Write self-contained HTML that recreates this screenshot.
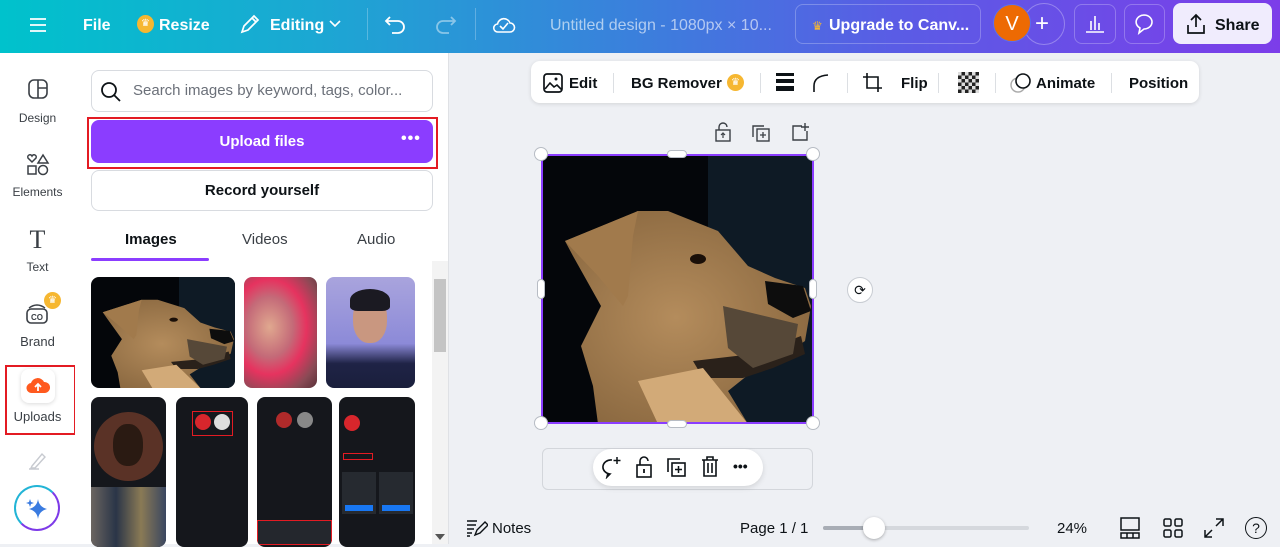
<!DOCTYPE html>
<html><head><meta charset="utf-8"><style>
*{box-sizing:border-box;margin:0;padding:0}
body{width:1280px;height:544px;overflow:hidden;font-family:"Liberation Sans",sans-serif;background:#eef0f4;position:relative;color:#0d1216}
.abs{position:absolute}
#hdr{left:0;top:0;width:1280px;height:53px;background:linear-gradient(90deg,#00c2cc 0%,#1ca7d3 25%,#3b7fdc 50%,#5a5ce5 70%,#7c3de9 100%);color:#fff}
#hdr .t{position:absolute;top:17px;font-size:16px;font-weight:bold}
.hbtn{position:absolute;top:4px;height:40px;border:1px solid rgba(255,255,255,.25);border-radius:8px}
#rail{left:0;top:53px;width:75px;height:491px;background:#fff}
.ri{position:absolute;left:0;width:75px;text-align:center;font-size:12px;color:#3a3f45}
#panel{left:75px;top:53px;width:374px;height:491px;background:#fff;border-right:1px solid #dfe1e5}
.box{position:absolute;border:1px solid #d8dbe0;border-radius:8px;background:#fff}
#canvas{left:450px;top:53px;width:830px;height:491px;background:#eef0f4}
.ph{position:absolute;border-radius:8px;overflow:hidden}
.handle{position:absolute;width:14px;height:14px;border-radius:50%;background:#fff;border:1px solid #b7bcc4}
.tb{position:absolute;top:22px;font-size:15px;font-weight:bold}
</style></head><body>
<svg width="0" height="0" style="position:absolute"><defs>
<radialGradient id="fur" cx="0.45" cy="0.5" r="0.6"><stop offset="0" stop-color="#b48c5c"/><stop offset="1" stop-color="#8a6840"/></radialGradient>
<symbol id="dog" viewBox="0 0 270 268" preserveAspectRatio="none">
<rect width="270" height="268" fill="#04060a"/>
<rect x="165" y="0" width="105" height="268" fill="#0e1a25"/>
<path d="M22 85 L95 55 L125 55 L175 75 L205 110 L232 122 L262 132 L268 150 L262 185 L240 200 L210 215 L185 235 L205 268 L55 268 L50 230 L38 190 L58 150 L30 100Z" fill="url(#fur)"/>
<path d="M22 85 L95 55 L90 80 L85 140 L80 150 L55 120Z" fill="#a17a4c"/>
<path d="M150 205 L210 198 L258 180 L262 198 L230 212 L200 222 L160 222Z" fill="#2a211a"/>
<path d="M222 125 L260 130 L268 155 L250 162 L225 148Z" fill="#0d0d0d"/>
<path d="M180 150 L255 168 L250 198 L210 212 L185 192Z" fill="#564838"/>
<ellipse cx="155" cy="103" rx="8" ry="5" fill="#1a0f08"/>
<path d="M95 225 L160 212 L205 268 L115 268Z" fill="#d2aa78"/>
</symbol>
</defs></svg>

<div id="hdr" class="abs">
 <svg class="abs" style="left:28px;top:16px" width="20" height="18"><path d="M2 3h16M2 9h16M2 15h16" stroke="#fff" stroke-width="1.8"/></svg>
 <div class="t" style="left:83px">File</div>
 <div class="abs" style="left:137px;top:15px;width:17px;height:18px;border-radius:50%;background:#f6b731;color:#fff;font-size:10px;text-align:center;line-height:18px">♛</div>
 <div class="t" style="left:159px">Resize</div>
 <svg class="abs" style="left:239px;top:13px" width="22" height="22"><path d="M3 19l2-6L15 3l4 4L9 17z M13 5l4 4" fill="none" stroke="#fff" stroke-width="1.7"/></svg>
 <div class="t" style="left:270px">Editing</div>
 <svg class="abs" style="left:328px;top:19px" width="14" height="10"><path d="M2 2l5 5 5-5" fill="none" stroke="#fff" stroke-width="1.6"/></svg>
 <div class="abs" style="left:367px;top:8px;width:1px;height:32px;background:rgba(255,255,255,.25)"></div>
 <svg class="abs" style="left:384px;top:13px" width="24" height="22"><path d="M6 4L2 8l4 4M2 8h12a6 6 0 010 12H8" fill="none" stroke="#fff" stroke-width="1.8"/></svg>
 <svg class="abs" style="left:433px;top:13px" width="24" height="22"><path d="M18 4l4 4-4 4M22 8H10a6 6 0 000 12h6" fill="none" stroke="rgba(255,255,255,.45)" stroke-width="1.8"/></svg>
 <div class="abs" style="left:475px;top:8px;width:1px;height:32px;background:rgba(255,255,255,.25)"></div>
 <svg class="abs" style="left:491px;top:12px" width="26" height="26"><path d="M7 20h12a4.5 4.5 0 000-9 6.5 6.5 0 00-12.5 1A4 4 0 007 20z M9 14l3 3 5-6" fill="none" stroke="#fff" stroke-width="1.6"/></svg>
 <div class="t" style="left:550px;font-weight:normal;color:rgba(255,255,255,.6)">Untitled design - 1080px × 10...</div>
 <div class="hbtn" style="left:795px;width:186px"></div>
 <div class="abs" style="left:812px;top:19px;font-size:12px;color:#f6b731">♛</div>
 <div class="t" style="left:829px">Upgrade to Canv...</div>
 <div class="abs" style="left:1023px;top:3px;width:42px;height:42px;border-radius:50%;border:1px solid rgba(255,255,255,.3)"></div>
 <div class="abs" style="left:1035px;top:10px;font-size:24px;font-weight:300">+</div>
 <div class="abs" style="left:993px;top:4px;width:38px;height:38px;border-radius:50%;background:#ed6a03;border:1px solid #5a6df0;text-align:center;line-height:38px;font-size:20px">V</div>
 <div class="hbtn" style="left:1074px;width:42px"></div>
 <svg class="abs" style="left:1084px;top:13px" width="22" height="22"><path d="M2 19h18M7 17V8M11 17V3M15 17V10" stroke="#fff" stroke-width="1.6"/></svg>
 <div class="hbtn" style="left:1124px;width:41px"></div>
 <svg class="abs" style="left:1133px;top:13px" width="22" height="22"><path d="M11 2a8 7 0 110 14l-5 4 1-5a8 7 0 014-13z" fill="none" stroke="#fff" stroke-width="1.6"/></svg>
 <div class="abs" style="left:1173px;top:3px;width:99px;height:41px;border-radius:8px;background:#f0ecfd"></div>
 <svg class="abs" style="left:1185px;top:13px" width="22" height="22"><path d="M11 14V2M6 7l5-5 5 5M3 12v8h16v-8" fill="none" stroke="#0d1216" stroke-width="1.7"/></svg>
 <div class="t" style="left:1215px;color:#0d1216">Share</div>
</div>

<div id="rail" class="abs">
 <svg class="abs" style="left:27px;top:25px" width="22" height="22"><rect x="2" y="2" width="18" height="18" rx="5" fill="none" stroke="#3a3f45" stroke-width="1.6"/><path d="M11 2v18M11 10h9" stroke="#3a3f45" stroke-width="1.6"/></svg>
 <div class="ri" style="top:58px">Design</div>
 <svg class="abs" style="left:26px;top:100px" width="24" height="24"><path d="M6 9l-4-4a2 2 0 014-2 2 2 0 014 2z" fill="none" stroke="#3a3f45" stroke-width="1.5"/><path d="M17 2l5 8h-10z" fill="none" stroke="#3a3f45" stroke-width="1.5"/><rect x="2" y="13" width="8" height="8" fill="none" stroke="#3a3f45" stroke-width="1.5"/><circle cx="17" cy="17" r="4.5" fill="none" stroke="#3a3f45" stroke-width="1.5"/></svg>
 <div class="ri" style="top:132px">Elements</div>
 <div class="ri" style="top:172px;font-size:26px;font-family:'Liberation Serif',serif">T</div>
 <div class="ri" style="top:207px">Text</div>
 <svg class="abs" style="left:24px;top:248px" width="26" height="24"><rect x="3" y="8" width="20" height="14" rx="4" fill="none" stroke="#3a3f45" stroke-width="1.6"/><text x="7" y="19" font-size="8" font-weight="bold" fill="#3a3f45" font-family="Liberation Sans">CO</text><path d="M5 7q8-6 16 0" fill="none" stroke="#3a3f45" stroke-width="1.4"/></svg>
 <div class="abs" style="left:44px;top:239px;width:17px;height:17px;border-radius:50%;background:#f6b731;color:#fff;font-size:10px;text-align:center;line-height:17px">♛</div>
 <div class="ri" style="top:281px;font-size:13px">Brand</div>
 <div class="abs" style="left:5px;top:312px;width:71px;height:70px;border:2px solid #e31b23"></div>
 <div class="abs" style="left:21px;top:316px;width:34px;height:34px;border-radius:8px;background:#fff;box-shadow:0 1px 4px rgba(0,0,0,.15)"></div>
 <svg class="abs" style="left:26px;top:322px" width="24" height="20"><path d="M6 18a5 5 0 01-1-10 7 7 0 0113-1 5 5 0 011 11z" fill="#ff5a1f"/><path d="M12 16V9M9 12l3-3 3 3" fill="none" stroke="#fff" stroke-width="1.8"/></svg>
 <div class="ri" style="top:356px;font-size:13px">Uploads</div>
 <svg class="abs" style="left:27px;top:397px" width="22" height="20"><path d="M5 16L15 4l3 3L8 18H4z M2 19h10" fill="none" stroke="#c7cad0" stroke-width="1.4"/></svg>
 <div class="abs" style="left:14px;top:432px;width:46px;height:46px;border-radius:50%;border:2px solid #5a5ce5;border-color:#22b4d6 #7d3ae8 #7d3ae8 #22b4d6"></div>
 <svg class="abs" style="left:25px;top:443px" width="26" height="26"><path d="M13 3q1 8 9 10q-8 2-9 10q-1-8-9-10q8-2 9-10z" fill="#3a7be0"/><path d="M5 3l1 3 3 1-3 1-1 3-1-3-3-1 3-1z" fill="#3a7be0"/></svg>
</div>

<div id="panel" class="abs">
 <div class="box" style="left:16px;top:17px;width:342px;height:42px"></div>
 <svg class="abs" style="left:25px;top:28px" width="22" height="22"><circle cx="9" cy="9" r="7" fill="none" stroke="#0d1216" stroke-width="1.8"/><path d="M14 14l6 6" stroke="#0d1216" stroke-width="1.8"/></svg>
 <div class="abs" style="left:58px;top:29px;font-size:15px;color:#6b7079">Search images by keyword, tags, color...</div>
 <div class="abs" style="left:12px;top:64px;width:351px;height:52px;border:2px solid #e31b23"></div>
 <div class="abs" style="left:16px;top:67px;width:342px;height:43px;border-radius:8px;background:#8b3dff;color:#fff;font-weight:bold;font-size:15px;text-align:center;line-height:43px">Upload files</div>
 <div class="abs" style="left:326px;top:77px;color:#fff;font-size:16px;font-weight:bold;letter-spacing:1px">•••</div>
 <div class="box" style="left:16px;top:117px;width:342px;height:41px;text-align:center;line-height:39px;font-size:15px;font-weight:bold">Record yourself</div>
 <div class="abs" style="left:50px;top:178px;font-size:15px;font-weight:bold">Images</div>
 <div class="abs" style="left:16px;top:205px;width:118px;height:3px;background:#8b3dff;border-radius:2px"></div>
 <div class="abs" style="left:167px;top:178px;font-size:15px;color:#3a3f45">Videos</div>
 <div class="abs" style="left:282px;top:178px;font-size:15px;color:#3a3f45">Audio</div>
 <div class="abs" style="left:357px;top:208px;width:16px;height:283px;background:#f3f3f3"></div>
 <div class="abs" style="left:359px;top:226px;width:12px;height:73px;background:#c4c4c4"></div>
 <div class="ph" style="left:16px;top:224px;width:144px;height:111px"><svg width="144" height="111"><use href="#dog"/></svg></div>
 <div class="ph" style="left:169px;top:224px;width:73px;height:111px;background:radial-gradient(ellipse at 35% 45%,#e0a88f 0%,#c46a78 35%,#e6335f 55%,#8a4a55 80%,#5a3038 100%)"></div>
 <div class="ph" style="left:251px;top:224px;width:89px;height:111px;background:linear-gradient(180deg,#a9a4dd 0%,#8c8ad8 60%,#1f2346 78%,#1a1f3c 100%)"><div style="position:absolute;left:27px;top:18px;width:34px;height:48px;border-radius:45%;background:#c99780"></div><div style="position:absolute;left:24px;top:12px;width:40px;height:22px;border-radius:50% 50% 20% 20%;background:#1b1a22"></div></div>
 <div class="ph" style="left:16px;top:344px;width:75px;height:150px;background:#15171c"><div style="position:absolute;left:3px;top:15px;width:69px;height:69px;border-radius:50%;background:#5a3226"></div><div style="position:absolute;left:22px;top:27px;width:30px;height:42px;border-radius:45%;background:#2a1a12"></div><div style="position:absolute;left:0;top:90px;width:75px;height:60px;background:linear-gradient(90deg,#6b6560,#2a3548,#8a7a55,#3a4660)"></div></div>
 <div class="ph" style="left:101px;top:344px;width:72px;height:150px;background:#15171c"><div style="position:absolute;left:16px;top:14px;width:41px;height:25px;border:1px solid #e31b23"></div><div style="position:absolute;left:19px;top:17px;width:16px;height:16px;border-radius:50%;background:#d8262c"></div><div style="position:absolute;left:38px;top:17px;width:16px;height:16px;border-radius:50%;background:#ddd"></div></div>
 <div class="ph" style="left:182px;top:344px;width:75px;height:150px;background:#15171c"><div style="position:absolute;left:19px;top:15px;width:16px;height:16px;border-radius:50%;background:#b02a2a"></div><div style="position:absolute;left:40px;top:15px;width:16px;height:16px;border-radius:50%;background:#888"></div><div style="position:absolute;left:0;background:#24272d;border:1px solid #e31b23;top:123px;width:75px;height:25px"></div></div>
 <div class="ph" style="left:264px;top:344px;width:76px;height:150px;background:#15171c"><div style="position:absolute;left:5px;top:18px;width:16px;height:16px;border-radius:50%;background:#d8262c"></div><div style="position:absolute;left:4px;top:56px;width:30px;height:7px;border:1px solid #e31b23"></div><div style="position:absolute;left:3px;top:75px;width:34px;height:42px;background:#262a30"></div><div style="position:absolute;left:40px;top:75px;width:34px;height:42px;background:#262a30"></div><div style="position:absolute;left:6px;top:108px;width:28px;height:6px;background:#1877f2"></div><div style="position:absolute;left:43px;top:108px;width:28px;height:6px;background:#1877f2"></div></div>
 <svg class="abs" style="left:359px;top:480px" width="12" height="8"><path d="M1 1h10L6 7z" fill="#555"/></svg>
</div>

<div id="canvas" class="abs">
 <div class="abs" style="left:81px;top:8px;width:668px;height:42px;background:#fff;border-radius:9px;box-shadow:0 1px 4px rgba(0,0,0,.12)"></div>
 <svg class="abs" style="left:92px;top:19px" width="22" height="22"><rect x="2" y="2" width="18" height="18" rx="3" fill="none" stroke="#0d1216" stroke-width="1.7"/><path d="M3 17l5-6 4 4 3-2 5 5" fill="none" stroke="#0d1216" stroke-width="1.6"/><circle cx="14" cy="7" r="1.5" fill="#0d1216"/></svg>
 <div class="tb" style="left:119px">Edit</div>
 <div class="abs" style="left:163px;top:20px;width:1px;height:20px;background:#dcdfe3"></div>
 <div class="tb" style="left:181px">BG Remover</div>
 <div class="abs" style="left:277px;top:21px;width:17px;height:17px;border-radius:50%;background:#f6b731;color:#fff;font-size:10px;text-align:center;line-height:17px">♛</div>
 <div class="abs" style="left:310px;top:20px;width:1px;height:20px;background:#dcdfe3"></div>
 <div class="abs" style="left:326px;top:20px;width:18px;height:3px;background:#0d1216"></div>
 <div class="abs" style="left:326px;top:26px;width:18px;height:4px;background:#0d1216"></div>
 <div class="abs" style="left:326px;top:33px;width:18px;height:5px;background:#0d1216"></div>
 <svg class="abs" style="left:362px;top:19px" width="20" height="22"><path d="M2 20V14Q2 4 16 3" fill="none" stroke="#0d1216" stroke-width="1.6"/></svg>
 <div class="abs" style="left:397px;top:20px;width:1px;height:20px;background:#dcdfe3"></div>
 <svg class="abs" style="left:412px;top:19px" width="22" height="22"><path d="M5 1v15h15M1 5h15v15" fill="none" stroke="#0d1216" stroke-width="1.6"/></svg>
 <div class="tb" style="left:451px">Flip</div>
 <div class="abs" style="left:488px;top:20px;width:1px;height:20px;background:#dcdfe3"></div>
 <div class="abs" style="left:508px;top:19px;width:21px;height:21px;background:repeating-conic-gradient(#222 0 25%,#ddd 0 50%) 0 0/7px 7px"></div>
 <div class="abs" style="left:545px;top:20px;width:1px;height:20px;background:#dcdfe3"></div>
 <svg class="abs" style="left:559px;top:18px" width="24" height="24"><circle cx="9" cy="14" r="7" fill="none" stroke="#aaa" stroke-width="1.4"/><circle cx="14" cy="10" r="7" fill="#fff" stroke="#0d1216" stroke-width="1.6"/></svg>
 <div class="tb" style="left:586px">Animate</div>
 <div class="abs" style="left:661px;top:20px;width:1px;height:20px;background:#dcdfe3"></div>
 <div class="tb" style="left:679px">Position</div>

 <svg class="abs" style="left:264px;top:69px" width="18" height="20"><rect x="2" y="8" width="14" height="11" fill="none" stroke="#3a3f45" stroke-width="1.4"/><path d="M5 8V5a4 4 0 018 0" fill="none" stroke="#3a3f45" stroke-width="1.4"/><path d="M9 16v-4M7 13l2-2 2 2" stroke="#3a3f45" stroke-width="1.2" fill="none"/></svg>
 <svg class="abs" style="left:301px;top:70px" width="20" height="20"><path d="M2 14V3h11" fill="none" stroke="#3a3f45" stroke-width="1.4"/><rect x="6" y="6" width="12" height="12" fill="none" stroke="#3a3f45" stroke-width="1.4"/><path d="M12 9v6M9 12h6" stroke="#3a3f45" stroke-width="1.3"/></svg>
 <svg class="abs" style="left:340px;top:69px" width="20" height="20"><path d="M12 4H3v14h14v-9" fill="none" stroke="#3a3f45" stroke-width="1.4"/><path d="M15 1v8M11 5h8" stroke="#3a3f45" stroke-width="1.4"/></svg>

 <div class="abs" style="left:91px;top:101px;width:273px;height:270px;border:2px solid #8b3dff;overflow:hidden"><svg width="270" height="268"><use href="#dog"/></svg></div>
 <div class="handle" style="left:84px;top:94px"></div>
 <div class="handle" style="left:356px;top:94px"></div>
 <div class="handle" style="left:84px;top:363px"></div>
 <div class="handle" style="left:356px;top:363px"></div>
 <div class="abs" style="left:217px;top:97px;width:20px;height:8px;border-radius:4px;background:#fff;border:1px solid #b7bcc4"></div>
 <div class="abs" style="left:217px;top:367px;width:20px;height:8px;border-radius:4px;background:#fff;border:1px solid #b7bcc4"></div>
 <div class="abs" style="left:87px;top:226px;width:8px;height:20px;border-radius:4px;background:#fff;border:1px solid #b7bcc4"></div>
 <div class="abs" style="left:359px;top:226px;width:8px;height:20px;border-radius:4px;background:#fff;border:1px solid #b7bcc4"></div>
 <div class="abs" style="left:397px;top:224px;width:26px;height:26px;border-radius:50%;background:#fff;border:1px solid #c8ccd2;text-align:center;line-height:24px;font-size:14px">⟳</div>

 <div class="abs" style="left:92px;top:395px;width:271px;height:42px;border:1px solid #d3d6db;border-radius:6px"></div>
 <div class="abs" style="left:143px;top:396px;width:170px;height:37px;border-radius:19px;background:#fff;box-shadow:0 2px 6px rgba(0,0,0,.12)"></div>
 <svg class="abs" style="left:149px;top:402px" width="24" height="24"><path d="M13 5a8 7 0 10-2 14l-3 3 1-4" fill="none" stroke="#0d1216" stroke-width="1.6"/><path d="M18 2v7M14.5 5.5h7" stroke="#0d1216" stroke-width="1.5"/></svg>
 <svg class="abs" style="left:184px;top:402px" width="20" height="24"><rect x="3" y="10" width="14" height="12" fill="none" stroke="#0d1216" stroke-width="1.6"/><path d="M6 10V6a4 4 0 018 0" fill="none" stroke="#0d1216" stroke-width="1.6"/><path d="M10 14v4" stroke="#0d1216" stroke-width="1.8"/></svg>
 <svg class="abs" style="left:216px;top:403px" width="22" height="22"><path d="M2 16V3h12" fill="none" stroke="#0d1216" stroke-width="1.6"/><rect x="6" y="7" width="13" height="13" fill="none" stroke="#0d1216" stroke-width="1.6"/><path d="M12.5 10v7M9 13.5h7" stroke="#0d1216" stroke-width="1.5"/></svg>
 <svg class="abs" style="left:250px;top:402px" width="20" height="22"><path d="M2 5h16M7 5V2h6v3M4 5v16h12V5M8 8v10M12 8v10" fill="none" stroke="#0d1216" stroke-width="1.6"/></svg>
 <div class="abs" style="left:283px;top:405px;font-size:14px;font-weight:bold">•••</div>

 <svg class="abs" style="left:16px;top:466px" width="22" height="18"><path d="M1 2h10M1 6h9M1 10h7M1 14h5M1 17h3M9 16l2-5 8-8 3 3-8 8z" fill="none" stroke="#0d1216" stroke-width="1.4"/></svg>
 <div class="abs" style="left:42px;top:467px;font-size:15px">Notes</div>
 <div class="abs" style="left:290px;top:467px;font-size:15px">Page 1 / 1</div>
 <div class="abs" style="left:373px;top:473px;width:206px;height:4px;border-radius:2px;background:#d5d8dd"></div>
 <div class="abs" style="left:373px;top:473px;width:50px;height:4px;border-radius:2px;background:#a8adb5"></div>
 <div class="abs" style="left:413px;top:464px;width:22px;height:22px;border-radius:50%;background:#fff;box-shadow:0 1px 3px rgba(0,0,0,.3)"></div>
 <div class="abs" style="left:607px;top:467px;font-size:15px">24%</div>
 <svg class="abs" style="left:669px;top:463px" width="22" height="24"><rect x="2" y="2" width="18" height="12" fill="none" stroke="#0d1216" stroke-width="1.5"/><path d="M2 17h18v5H2zM8 17v5M14 17v5" fill="none" stroke="#0d1216" stroke-width="1.5"/></svg>
 <svg class="abs" style="left:712px;top:464px" width="22" height="22"><rect x="2" y="2" width="7" height="7" rx="1.5" fill="none" stroke="#0d1216" stroke-width="1.5"/><rect x="13" y="2" width="7" height="7" rx="1.5" fill="none" stroke="#0d1216" stroke-width="1.5"/><rect x="2" y="13" width="7" height="7" rx="1.5" fill="none" stroke="#0d1216" stroke-width="1.5"/><rect x="13" y="13" width="7" height="7" rx="1.5" fill="none" stroke="#0d1216" stroke-width="1.5"/></svg>
 <svg class="abs" style="left:753px;top:464px" width="22" height="22"><path d="M13 2h7v7M20 2l-7 7M9 20H2v-7M2 20l7-7" fill="none" stroke="#0d1216" stroke-width="1.5"/></svg>
 <div class="abs" style="left:795px;top:464px;width:22px;height:22px;border-radius:50%;border:1.6px solid #0d1216;text-align:center;font-size:14px;line-height:20px">?</div>
</div>
</body></html>
